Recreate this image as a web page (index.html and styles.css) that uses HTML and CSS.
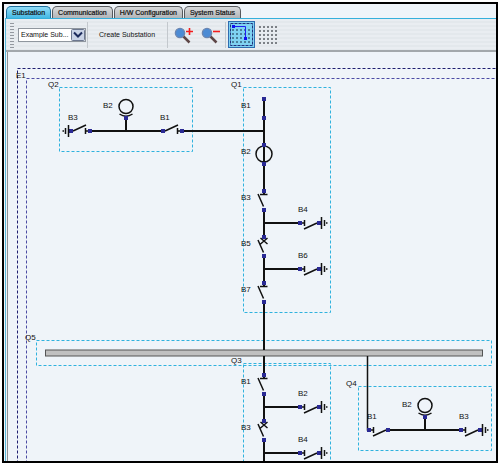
FILE: index.html
```html
<!DOCTYPE html>
<html lang="en">
<head>
    <meta charset="UTF-8">
    <meta name="viewport" content="width=device-width, initial-scale=1.0">
    <title>Substation</title>
    <link rel="stylesheet" href="styles.css">
</head>
<body>
    <div class="window">
        <nav class="tabs">
            <button type="button" class="tab active">Substation</button>
            <button type="button" class="tab">Communication</button>
            <button type="button" class="tab">H/W Configuration</button>
            <button type="button" class="tab">System Status</button>
        </nav>
        <main class="panel">
            <div class="toolbar">
                <span class="grip"></span>
                <div class="picker">
                    <select class="picker-select" aria-label="Substation">
                        <option>Example Sub...</option>
                    </select>
                    <svg class="picker-arrow" width="14" height="12" viewBox="0 0 14 12">
                        <rect x="0.5" y="0.5" width="13" height="11" rx="1" fill="#c9d3e6" stroke="#6d7890"/>
                        <path d="M3 3.5 L7 7.5 L11 3.5" fill="none" stroke="#1b2a5c" stroke-width="2"/>
                    </svg>
                </div>
                <span class="separator"></span>
                <button type="button" class="create-button">Create Substation</button>
                <span class="separator"></span>
                <div class="tools">
                    <button type="button" class="tool" aria-label="Zoom in">
                        <svg width="20" height="18" viewBox="0 0 20 18">
                            <path d="M9 10 L15.5 16.5" stroke="#5e4646" stroke-width="2.5"/>
                            <circle cx="6" cy="7" r="4.6" fill="#4c8bd4" stroke="#6c86b0" stroke-width="1.4"/>
                            <path d="M12 5.5 H19 M15.5 2 V9" stroke="#f21c1c" stroke-width="1.6"/>
                        </svg>
                    </button>
                    <button type="button" class="tool" aria-label="Zoom out">
                        <svg width="20" height="18" viewBox="0 0 20 18">
                            <path d="M9 10 L15.5 16.5" stroke="#5e4646" stroke-width="2.5"/>
                            <circle cx="6" cy="7" r="4.6" fill="#4c8bd4" stroke="#6c86b0" stroke-width="1.4"/>
                            <path d="M12 5.5 H19" stroke="#f21c1c" stroke-width="1.6"/>
                        </svg>
                    </button>
                </div>
                <span class="separator"></span>
                <button type="button" class="tool snap" aria-label="Snap to grid">
                    <svg width="27" height="27" viewBox="0 0 27 27">
                        <defs>
                            <pattern id="dots" x="4" y="4" width="4" height="4" patternUnits="userSpaceOnUse">
                                <rect width="2" height="2" fill="#4a7f9c"/>
                            </pattern>
                        </defs>
                        <rect x="0.5" y="0.5" width="26" height="26" fill="#7fd2f2" stroke="#2f6cb0"/>
                        <rect x="2.5" y="2.5" width="22" height="22" fill="none" stroke="#20307c" stroke-dasharray="3 1"/>
                        <rect x="4" y="8" width="18" height="14" fill="url(#dots)"/>
                        <path d="M5 5.5 H17.5 V17" fill="none" stroke="#2020f0"/>
                        <rect x="4" y="4" width="3" height="3" fill="#1010f0"/>
                        <rect x="16" y="16" width="3" height="3" fill="#1010f0"/>
                    </svg>
                </button>
                <button type="button" class="tool" aria-label="Show grid">
                    <svg width="20" height="18" viewBox="0 0 20 18">
                        <defs>
                            <pattern id="grid" width="4" height="4" patternUnits="userSpaceOnUse">
                                <rect width="2" height="2" fill="#7c8186"/>
                            </pattern>
                        </defs>
                        <rect width="18" height="18" fill="url(#grid)"/>
                    </svg>
                </button>
            </div>
            <div class="canvas">
                <svg class="diagram" width="1200" height="900" viewBox="8 52 1200 900">
                    <defs>
                        <rect id="node" x="-2" y="-2" width="4" height="4" class="node"/>
                        <!-- vertical switch, origin at the upper node -->
                        <g id="switch">
                            <path class="wire thin" d="M-4 3.5 H3.5 M-6 3 L-0.5 15.5"/>
                            <path class="wire" d="M0 0 V3"/>
                            <use href="#node"/>
                            <use href="#node" y="19"/>
                        </g>
                        <g id="breaker">
                            <path class="wire thin" d="M-3.5 1 L3.5 7 M3.5 1 L-3.5 7 M-6 3 L-0.5 15.5"/>
                            <use href="#node"/>
                            <use href="#node" y="19"/>
                        </g>
                        <!-- horizontal switch, origin at the left node -->
                        <g id="hswitch">
                            <path class="wire thin" d="M0 0 H4 M4.5 -3 V3 M4 6 L17 0"/>
                            <use href="#node"/>
                            <use href="#node" x="19"/>
                        </g>
                        <g id="ground">
                            <path class="wire thin" d="M2.5 -6 V6 M5.5 -3 V3 M7 0 H8.5"/>
                        </g>
                        <g id="earth">
                            <use href="#hswitch"/>
                            <use href="#ground" x="19"/>
                        </g>
                        <g id="transformer">
                            <circle class="wire thin" cy="-11.5" r="7"/>
                            <path class="wire thin" d="M-6.5 -4 Q0 0.5 6.5 -4"/>
                            <path class="wire" d="M0 0 V13"/>
                            <use href="#node"/>
                        </g>
                    </defs>

                    <rect class="bound outer" x="17.5" y="68.5" width="1180" height="870"/>
                    <rect class="bound inner" x="26.5" y="78.5" width="1160" height="850"/>

                    <g class="bay">
                        <rect x="59.5" y="87.5" width="133" height="64"/>
                        <rect x="243.5" y="87.5" width="87" height="225"/>
                        <rect x="36.5" y="340.5" width="455" height="25"/>
                        <rect x="243.5" y="363.5" width="87" height="225"/>
                        <rect x="358.5" y="386.5" width="133" height="64"/>
                    </g>

                    <rect class="busbar" x="45.5" y="350" width="437" height="6"/>

                    <!-- Q2 -->
                    <path class="wire" d="M89 131 H162 M182 131 H264"/>
                    <use href="#transformer" x="126" y="118"/>
                    <use href="#hswitch" transform="translate(90 131) rotate(180)"/>
                    <use href="#ground" transform="translate(71 131) rotate(180)"/>
                    <use href="#hswitch" transform="translate(182 131) rotate(180)"/>

                    <!-- Q1 -->
                    <path class="wire" d="M264 99 V191 M264 210 V237 M264 256 V283 M264 302 V350 M264 223 H300 M264 269 H300"/>
                    <circle class="wire thin" cx="264" cy="154" r="8"/>
                    <use href="#node" x="264" y="99"/>
                    <use href="#node" x="264" y="118"/>
                    <use href="#node" x="264" y="145"/>
                    <use href="#node" x="264" y="164"/>
                    <use href="#switch" x="264" y="191"/>
                    <use href="#breaker" x="264" y="237"/>
                    <use href="#switch" x="264" y="283"/>
                    <use href="#earth" x="300" y="223"/>
                    <use href="#earth" x="300" y="269"/>

                    <!-- Q3 -->
                    <path class="wire" d="M264 356 V375 M264 394 V421 M264 440 V467 M264 407 H300 M264 453 H300"/>
                    <use href="#switch" x="264" y="375"/>
                    <use href="#breaker" x="264" y="421"/>
                    <use href="#switch" x="264" y="467"/>
                    <use href="#earth" x="300" y="407"/>
                    <use href="#earth" x="300" y="453"/>

                    <!-- Q4 -->
                    <path class="wire thin" d="M367.5 356 V430 H370"/>
                    <path class="wire" d="M388 430 H461"/>
                    <use href="#transformer" x="425" y="417"/>
                    <use href="#hswitch" x="369" y="430"/>
                    <use href="#earth" x="461" y="430"/>

                    <g class="labels">
                        <text x="16" y="78">E1</text>
                        <text x="48" y="87">Q2</text>
                        <text x="231" y="87">Q1</text>
                        <text x="25" y="340">Q5</text>
                        <text x="231" y="363">Q3</text>
                        <text x="346" y="386">Q4</text>
                        <text x="68" y="120">B3</text>
                        <text x="103" y="108">B2</text>
                        <text x="160" y="120">B1</text>
                        <text x="241" y="108">B1</text>
                        <text x="241" y="154">B2</text>
                        <text x="241" y="200">B3</text>
                        <text x="241" y="246">B5</text>
                        <text x="241" y="292">B7</text>
                        <text x="298" y="212">B4</text>
                        <text x="298" y="258">B6</text>
                        <text x="241" y="384">B1</text>
                        <text x="241" y="430">B3</text>
                        <text x="298" y="396">B2</text>
                        <text x="298" y="442">B4</text>
                        <text x="367" y="419">B1</text>
                        <text x="402" y="407">B2</text>
                        <text x="459" y="419">B3</text>
                    </g>
                </svg>
            </div>
        </main>
    </div>
</body>
</html>
```
FILE: styles.css
```css
* {
    box-sizing: border-box;
}
body {
    font-family: "Liberation Sans", Arial, sans-serif;
    font-size: 7px;
    margin: 0;
    padding: 2px 2px 1px;
    height: 100vh;
    background-color: white;
    color: #111;
}
button {
    font: inherit;
    color: inherit;
    padding: 0;
    border: none;
    background: none;
    cursor: pointer;
}
svg {
    display: block;
}
.window {
    display: flex;
    flex-direction: column;
    height: 100%;
    border: 2px solid black;
    background-color: #eff4f9;
    overflow: hidden;
}
.tabs {
    display: flex;
    gap: 1px;
    padding: 2px 2px 0;
}
.tab {
    height: 12px;
    padding: 0 5px;
    border: 1px solid #55585c;
    border-bottom: none;
    border-radius: 5px 5px 0 0;
    background: linear-gradient(#d8dadc, #b2b5b8);
    -webkit-text-stroke: 0.2px #111;
}
.tab.active {
    border-color: #1c6f9c;
    background: linear-gradient(#8fdcf8, #45b8e4);
}
.panel {
    display: flex;
    flex-direction: column;
    flex: 1;
    min-height: 0;
    margin-left: 1px;
    border-top: 1px solid #35b0dc;
    border-left: 1px solid #58b8da;
}
.toolbar {
    display: flex;
    align-items: center;
    height: 33px;
    padding: 0 4px;
    border-bottom: 2px solid #a3a8ac;
    background: repeating-linear-gradient(#e9edf1 0, #e9edf1 2px, #e3e8ec 2px, #e3e8ec 4px);
}
.grip {
    width: 4px;
    height: 26px;
    margin-right: 4px;
    background: radial-gradient(circle, #9499a0 1px, transparent 1px) 0 0 / 2px 3px;
}
.picker {
    display: flex;
    align-items: center;
    position: relative;
    width: 68px;
}
.picker-select {
    appearance: none;
    width: 100%;
    height: 14px;
    padding: 0 0 0 2px;
    border: 1px solid #8f969e;
    border-radius: 0;
    background-color: white;
    font: inherit;
    color: inherit;
}
.picker-arrow {
    position: absolute;
    right: 1px;
    pointer-events: none;
}
.separator {
    width: 1px;
    height: 26px;
    margin-left: 1px;
    background-color: #c3c8cd;
}
.create-button {
    padding: 0 11px;
}
.tools {
    display: flex;
    gap: 7px;
    padding: 0 3px 0 6px;
}
.snap {
    margin: 0 4px 0 2px;
}
.canvas {
    flex: 1;
    min-height: 0;
    margin-left: 1px;
    border-left: 1px solid #8d9296;
    overflow: hidden;
}
.wire {
    fill: none;
    stroke: #111;
    stroke-width: 2;
}
.wire.thin {
    stroke-width: 1.5;
}
.node {
    fill: #2a2a94;
}
.bound {
    fill: none;
    stroke-dasharray: 3 2;
}
.bound.outer {
    stroke: #1f1f70;
}
.bound.inner {
    stroke: #4c4ca4;
}
.bay {
    fill: none;
    stroke: #2fb2de;
    stroke-dasharray: 3 2;
}
.busbar {
    fill: #c0c0c0;
    stroke: #555;
}
.labels {
    font-size: 8px;
    fill: #111;
}
```
